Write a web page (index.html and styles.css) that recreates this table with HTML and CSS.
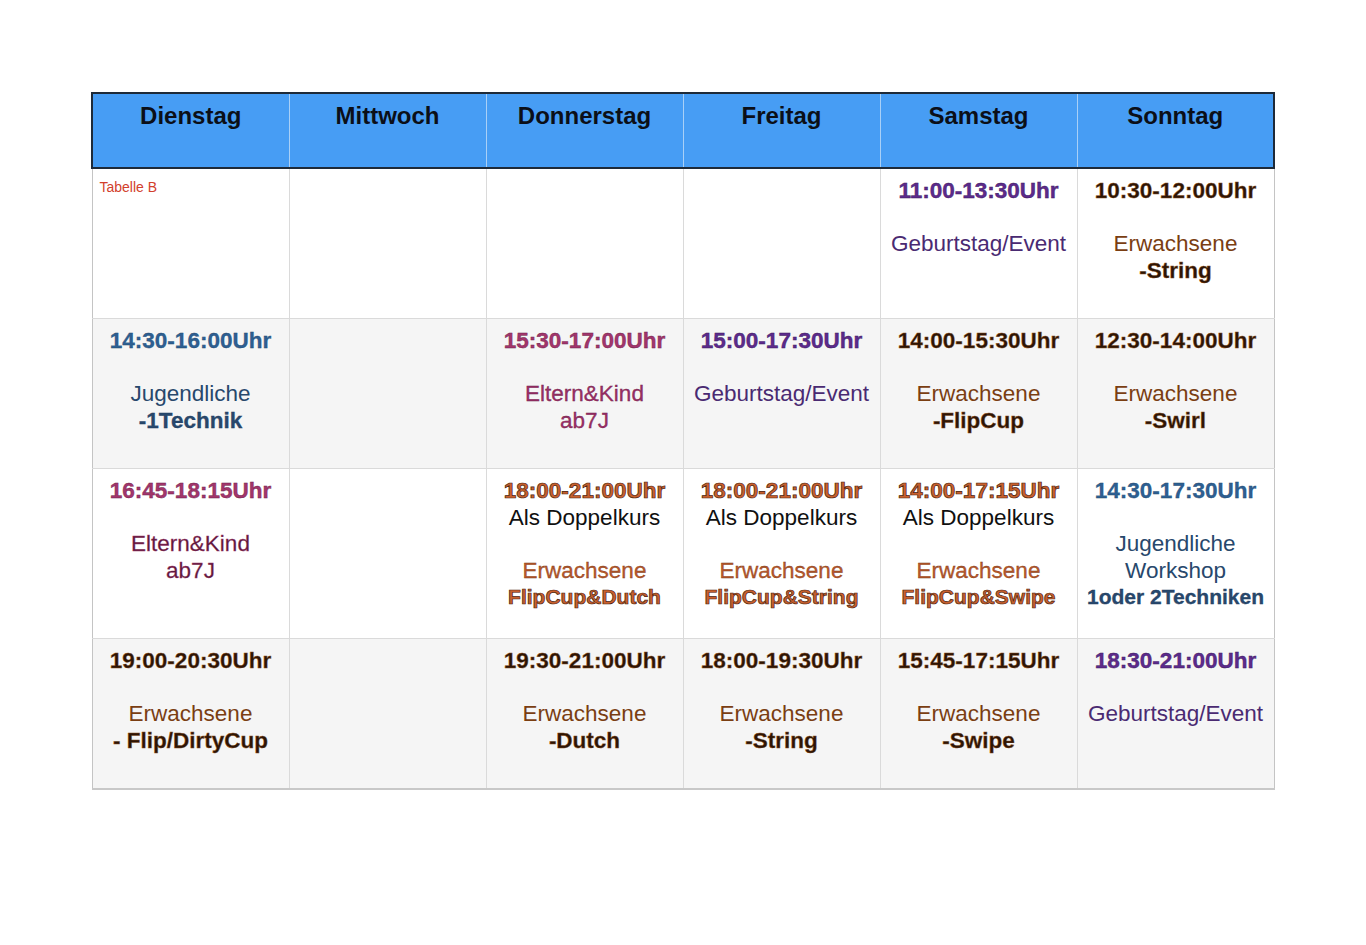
FILE: index.html
```html
<!DOCTYPE html>
<html lang="de">
<head>
<meta charset="utf-8">
<title>Tabelle B</title>
<link rel="stylesheet" href="styles.css">
</head>
<body>
<table class="plan">
  <colgroup>
    <col><col><col><col><col><col>
  </colgroup>
  <thead>
    <tr>
      <th>Dienstag</th>
      <th>Mittwoch</th>
      <th>Donnerstag</th>
      <th>Freitag</th>
      <th>Samstag</th>
      <th>Sonntag</th>
    </tr>
  </thead>
  <tbody>
    <tr class="r1">
      <td class="cap-cell"><div class="caption">Tabelle B</div></td>
      <td></td>
      <td></td>
      <td></td>
      <td>
        <div class="t purple">11:00-13:30Uhr</div>
        <div class="gap"></div>
        <div class="l purple-d">Geburtstag/Event</div>
      </td>
      <td>
        <div class="t brown">10:30-12:00Uhr</div>
        <div class="gap"></div>
        <div class="l brown-l">Erwachsene</div>
        <div class="b brown">-String</div>
      </td>
    </tr>
    <tr class="r2">
      <td>
        <div class="t blue">14:30-16:00Uhr</div>
        <div class="gap"></div>
        <div class="l blue-d">Jugendliche</div>
        <div class="b blue-d">-1Technik</div>
      </td>
      <td></td>
      <td>
        <div class="t magenta">15:30-17:00Uhr</div>
        <div class="gap"></div>
        <div class="l magenta-l">Eltern&amp;Kind</div>
        <div class="l magenta-l">ab7J</div>
      </td>
      <td>
        <div class="t purple">15:00-17:30Uhr</div>
        <div class="gap"></div>
        <div class="l purple-d">Geburtstag/Event</div>
      </td>
      <td>
        <div class="t brown">14:00-15:30Uhr</div>
        <div class="gap"></div>
        <div class="l brown-l">Erwachsene</div>
        <div class="b brown">-FlipCup</div>
      </td>
      <td>
        <div class="t brown">12:30-14:00Uhr</div>
        <div class="gap"></div>
        <div class="l brown-l">Erwachsene</div>
        <div class="b brown">-Swirl</div>
      </td>
    </tr>
    <tr class="r3">
      <td>
        <div class="t magenta">16:45-18:15Uhr</div>
        <div class="gap"></div>
        <div class="l magenta-d">Eltern&amp;Kind</div>
        <div class="l magenta-d">ab7J</div>
      </td>
      <td></td>
      <td>
        <div class="t orange">18:00-21:00Uhr</div>
        <div class="l black">Als Doppelkurs</div>
        <div class="gap"></div>
        <div class="l orange-l">Erwachsene</div>
        <div class="b orange small">FlipCup&amp;Dutch</div>
      </td>
      <td>
        <div class="t orange">18:00-21:00Uhr</div>
        <div class="l black">Als Doppelkurs</div>
        <div class="gap"></div>
        <div class="l orange-l">Erwachsene</div>
        <div class="b orange small">FlipCup&amp;String</div>
      </td>
      <td>
        <div class="t orange">14:00-17:15Uhr</div>
        <div class="l black">Als Doppelkurs</div>
        <div class="gap"></div>
        <div class="l orange-l">Erwachsene</div>
        <div class="b orange small">FlipCup&amp;Swipe</div>
      </td>
      <td>
        <div class="t blue">14:30-17:30Uhr</div>
        <div class="gap"></div>
        <div class="l blue-d">Jugendliche</div>
        <div class="l blue-d">Workshop</div>
        <div class="b blue-d small">1oder 2Techniken</div>
      </td>
    </tr>
    <tr class="r4">
      <td>
        <div class="t brown">19:00-20:30Uhr</div>
        <div class="gap"></div>
        <div class="l brown-l">Erwachsene</div>
        <div class="b brown">- Flip/DirtyCup</div>
      </td>
      <td></td>
      <td>
        <div class="t brown">19:30-21:00Uhr</div>
        <div class="gap"></div>
        <div class="l brown-l">Erwachsene</div>
        <div class="b brown">-Dutch</div>
      </td>
      <td>
        <div class="t brown">18:00-19:30Uhr</div>
        <div class="gap"></div>
        <div class="l brown-l">Erwachsene</div>
        <div class="b brown">-String</div>
      </td>
      <td>
        <div class="t brown">15:45-17:15Uhr</div>
        <div class="gap"></div>
        <div class="l brown-l">Erwachsene</div>
        <div class="b brown">-Swipe</div>
      </td>
      <td>
        <div class="t purple">18:30-21:00Uhr</div>
        <div class="gap"></div>
        <div class="l purple-d">Geburtstag/Event</div>
      </td>
    </tr>
  </tbody>
</table>
</body>
</html>
```

FILE: styles.css
```css
html, body {
  margin: 0;
  padding: 0;
  background: #ffffff;
}

body {
  padding: 92px 0 0 91px;
  font-family: "Liberation Sans", Arial, sans-serif;
}

.plan {
  border-collapse: collapse;
  table-layout: fixed;
  width: 1182px;
}

.plan col {
  width: 197px;
}

.plan th {
  background: #479df4;
  color: #0b0f18;
  font-size: 24px;
  font-weight: bold;
  height: 65px;
  padding: 8px 0 0 0;
  vertical-align: top;
  text-align: center;
  line-height: 28px;
  border-top: 2px solid #1e2a38;
  border-bottom: 2px solid #1e2a38;
  border-left: 1px solid #a9d0f7;
  border-right: 1px solid #a9d0f7;
}

.plan th:first-child {
  border-left: 2px solid #1e2a38;
}

.plan th:last-child {
  border-right: 2px solid #1e2a38;
}

.plan td {
  border: 1px solid #dadada;
  vertical-align: top;
  text-align: center;
  padding: 9px 0 0 0;
  font-size: 22.5px;
  line-height: 26.5px;
  white-space: nowrap;
  overflow: hidden;
}

.plan td:first-child {
  border-left: 1px solid #c4c4c4;
}

.plan td:last-child {
  border-right: 1px solid #c4c4c4;
}

.plan tbody tr:last-child td {
  border-bottom: 2px solid #c8c8c8;
}

.r1 td { height: 140px; background: #ffffff; }
.r2 td { height: 140px; background: #f5f5f5; }
.r3 td { height: 160px; background: #ffffff; }
.r4 td { height: 140px; background: #f5f5f5; }

.plan td.cap-cell {
  text-align: left;
  padding: 8px 0 0 7px;
}

.caption {
  color: #d2402c;
  font-size: 14px;
  line-height: 20px;
}

.t, .b {
  font-weight: bold;
}

.small {
  font-size: 21px;
}

.gap {
  height: 26.5px;
}

.purple {
  color: #5c2a8c;
  -webkit-text-stroke: 0.4px #3a1a5a;
}
.purple-d {
  color: #4a2a72;
}

.brown {
  color: #2c1506;
  -webkit-text-stroke: 0.4px #8a4a18;
}
.brown-l {
  color: #7a3e12;
}

.blue {
  color: #2d5f92;
  -webkit-text-stroke: 0.3px #24476c;
}
.blue-d {
  color: #28486c;
}
.b.blue-d {
  -webkit-text-stroke: 0.3px #1f3b5c;
}

.magenta {
  color: #a2356c;
  -webkit-text-stroke: 0.4px #6e1e48;
}
.magenta-l {
  color: #9a2f66;
  -webkit-text-stroke: 0.3px #6e1e48;
}
.magenta-d {
  color: #5e1a3c;
  -webkit-text-stroke: 0.3px #a2356c;
}

.orange {
  color: #c8602e;
  -webkit-text-stroke: 0.7px #4a200c;
}
.orange-l {
  color: #b8582c;
  -webkit-text-stroke: 0.3px #7a3814;
}

.black {
  color: #101010;
}
```
